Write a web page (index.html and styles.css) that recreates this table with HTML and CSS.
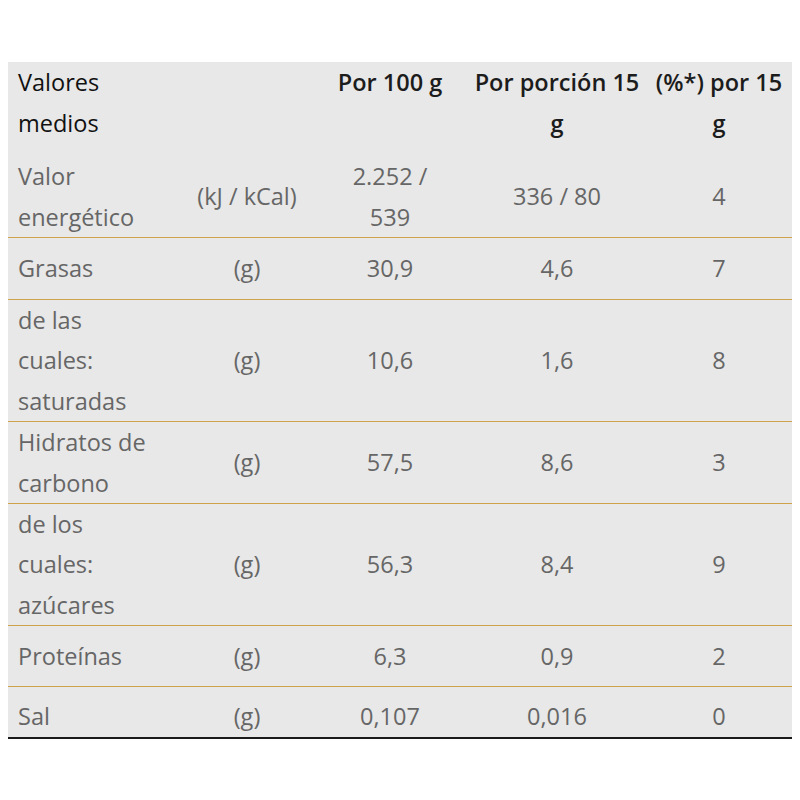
FILE: index.html
```html
<!DOCTYPE html>
<html lang="es">
<head>
<meta charset="utf-8">
<link rel="stylesheet" href="styles.css">
</head>
<body>
<div class="wrap">
<table class="nutri">
<colgroup>
<col class="c1"><col class="c2"><col class="c3"><col class="c4"><col class="c5">
</colgroup>
<thead>
<tr>
<th class="first">Valores medios</th>
<th></th>
<th class="mid">Por 100 g</th>
<th>Por porción 15 g</th>
<th>(%*) por 15 g</th>
</tr>
</thead>
<tbody>
<tr><td class="first">Valor energético</td><td>(kJ / kCal)</td><td class="mid">2.252 / 539</td><td>336 / 80</td><td>4</td></tr>
<tr class="tall1"><td class="first">Grasas</td><td>(g)</td><td class="mid">30,9</td><td>4,6</td><td>7</td></tr>
<tr class="l3"><td class="first">de las cuales: saturadas</td><td>(g)</td><td class="mid">10,6</td><td>1,6</td><td>8</td></tr>
<tr class="l2"><td class="first">Hidratos de carbono</td><td>(g)</td><td class="mid">57,5</td><td>8,6</td><td>3</td></tr>
<tr class="l3"><td class="first">de los cuales: azúcares</td><td>(g)</td><td class="mid">56,3</td><td>8,4</td><td>9</td></tr>
<tr><td class="first">Proteínas</td><td>(g)</td><td class="mid">6,3</td><td>0,9</td><td>2</td></tr>
<tr class="last"><td class="first">Sal</td><td>(g)</td><td class="mid">0,107</td><td>0,016</td><td>0</td></tr>
</tbody>
</table>
</div>
</body>
</html>
```
FILE: styles.css
```css
html, body {
  margin: 0;
  padding: 0;
  background: #ffffff;
}
body {
  padding: 62px 8px 0 8px;
  font-family: "Open Sans", "DejaVu Sans", sans-serif;
}
.wrap {
  width: 784px;
  background: #e8e8e8;
  border-bottom: 2px solid #1a1a1a;
}
.nutri {
  width: 784px;
  border-collapse: separate;
  border-spacing: 0;
  table-layout: fixed;
  font-size: 23.5px;
  line-height: 40.5px;
}
.c1 { width: 174px; }
.c2 { width: 130px; }
.c3 { width: 156px; }
.c4 { width: 178px; }
.c5 { width: 146px; }
.nutri th {
  font-weight: 600;
  color: #1c1c1c;
  text-align: center;
  vertical-align: top;
  padding: 0 5px 13px 5px;
}
.nutri th.first {
  font-weight: 400;
  color: #111111;
  text-align: left;
  padding: 0 20px 13px 10px;
}
.nutri td {
  color: #666666;
  text-align: center;
  vertical-align: middle;
  padding: 0 5px;
  height: 60px;
  border-bottom: 1px solid #cda24a;
}
.nutri tr.tall1 td {
  height: 61px;
}
.nutri tr.l2 td {
  height: 81px;
}
.nutri tr.l3 td {
  height: 121px;
  line-height: 40.33px;
}
.nutri td.first {
  text-align: left;
  padding: 0 20px 0 10px;
}
.nutri .mid {
  padding-left: 18px;
  padding-right: 18px;
}
.nutri tr.last td {
  border-bottom: none;
  height: 41px;
  vertical-align: top;
  padding-top: 9px;
}
```
